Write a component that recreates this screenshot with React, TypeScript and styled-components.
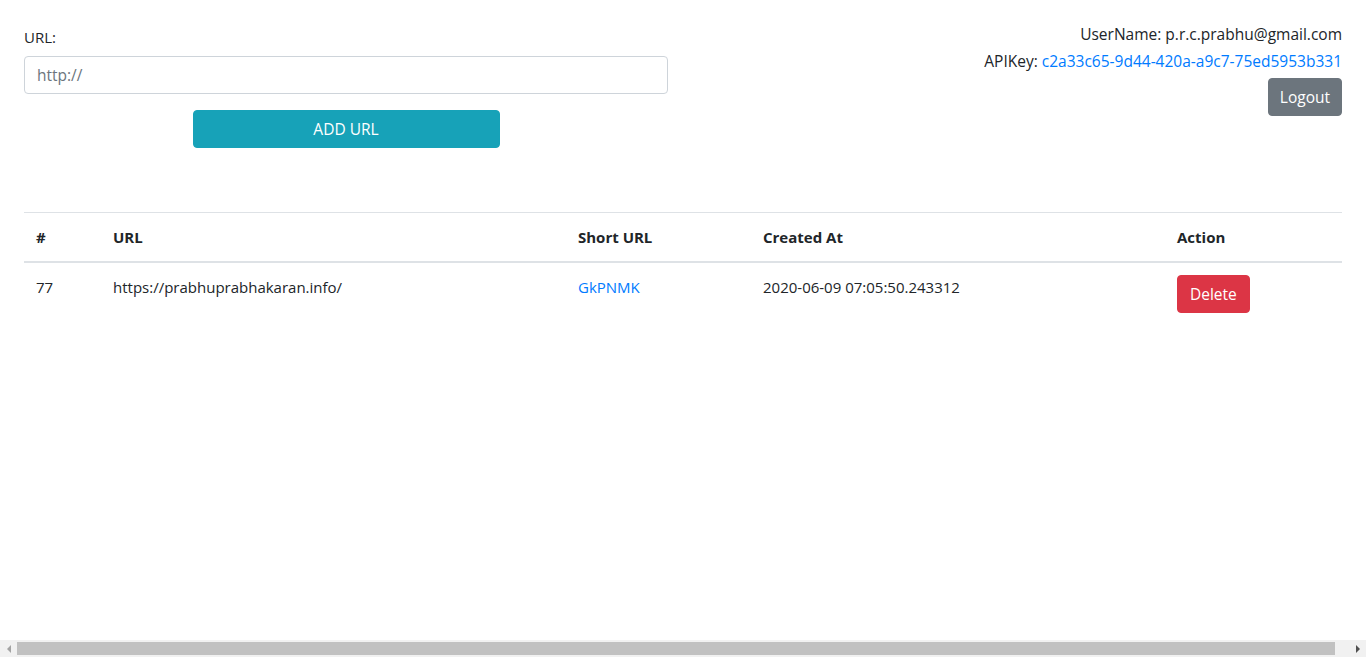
import React from "react";
import styled, { createGlobalStyle } from "styled-components";

const Global = createGlobalStyle`
  html, body { margin: 0; padding: 0; background: #fff; }
  body {
    font-family: "Open Sans", "Noto Sans", Arial, sans-serif;
    font-size: 15px;
    line-height: 24px;
    color: #212529;
    overflow: hidden;
  }
  * { box-sizing: border-box; }
`;

const Page = styled.div`
  width: 100%;
  padding: 22px 24px 0 24px;
`;

const Top = styled.div`
  display: grid;
  grid-template-columns: 644px 1fr;
  align-items: start;
`;

const FormCol = styled.form`
  display: flex;
  flex-direction: column;
  padding-top: 3px;
`;

const Label = styled.label`
  display: block;
  margin-bottom: 7px;
`;

const Input = styled.input`
  height: 38px;
  width: 100%;
  padding: 6px 12px;
  font: inherit;
  font-size: 15.5px;
  color: #495057;
  border: 1px solid #ced4da;
  border-radius: 4px;
  outline: none;
  &::placeholder { color: #6c757d; }
`;

const Button = styled.button<{ $bg: string }>`
  height: 38px;
  padding: 6px 12px;
  font: inherit;
  font-size: 15.5px;
  color: #fff;
  background: ${(p) => p.$bg};
  border: 1px solid ${(p) => p.$bg};
  border-radius: 4px;
  cursor: pointer;
`;

const AddButton = styled(Button)`
  width: 307px;
  align-self: center;
  margin-top: 16px;
`;

const UserCol = styled.div`
  display: flex;
  flex-direction: column;
  align-items: flex-end;
  text-align: right;
`;

const InfoLine = styled.div`
  font-size: 15.5px;
  line-height: 24px;
  margin-bottom: 3px;
  font-weight: 500;
`;

const Link = styled.a`
  color: #007bff;
  text-decoration: none;
`;

const LogoutButton = styled(Button)`
  margin-top: 2px;
  padding: 6px 11px;
`;

const Table = styled.table`
  width: 100%;
  margin-top: 64px;
  border-collapse: collapse;
  table-layout: fixed;
`;

const Th = styled.th<{ $w: number }>`
  width: ${(p) => p.$w}px;
  text-align: left;
  font-weight: 700;
  padding: 12px;
  vertical-align: bottom;
  border-top: 1px solid #dee2e6;
  border-bottom: 2px solid #dee2e6;
`;

const Td = styled.td`
  padding: 12px;
  vertical-align: top;
`;

const ScrollBar = styled.div`
  position: fixed;
  left: 0;
  right: 0;
  bottom: 0;
  height: 17px;
  background: #f1f1f1;
  display: flex;
  align-items: center;
`;

const Arrow = styled.div<{ $dir: "left" | "right"; $color: string }>`
  width: 17px;
  height: 17px;
  display: flex;
  align-items: center;
  justify-content: center;
  &::before {
    content: "";
    width: 0;
    height: 0;
    border-top: 4px solid transparent;
    border-bottom: 4px solid transparent;
    ${(p) =>
      p.$dir === "left"
        ? `border-right: 4px solid ${p.$color};`
        : `border-left: 4px solid ${p.$color};`}
  }
`;

const Track = styled.div`
  flex: 1;
  height: 17px;
  padding: 2px 14px 2px 0;
  display: flex;
`;

const Thumb = styled.div`
  flex: 1;
  background: #c1c1c1;
`;

export default function App() {
  return (
    <>
      <Global />
      <Page>
        <Top>
          <FormCol onSubmit={(e) => e.preventDefault()}>
            <Label htmlFor="url">URL:</Label>
            <Input id="url" placeholder="http://" />
            <AddButton $bg="#17a2b8" type="submit">ADD URL</AddButton>
          </FormCol>
          <UserCol>
            <InfoLine>UserName: p.r.c.prabhu@gmail.com</InfoLine>
            <InfoLine>
              APIKey: <Link href="#">c2a33c65-9d44-420a-a9c7-75ed5953b331</Link>
            </InfoLine>
            <LogoutButton $bg="#6c757d">Logout</LogoutButton>
          </UserCol>
        </Top>
        <Table>
          <thead>
            <tr>
              <Th $w={77}>#</Th>
              <Th $w={465}>URL</Th>
              <Th $w={185}>Short URL</Th>
              <Th $w={414}>Created At</Th>
              <Th $w={177}>Action</Th>
            </tr>
          </thead>
          <tbody>
            <tr>
              <Td>77</Td>
              <Td>https://prabhuprabhakaran.info/</Td>
              <Td><Link href="#">GkPNMK</Link></Td>
              <Td>2020-06-09 07:05:50.243312</Td>
              <Td><Button $bg="#dc3545">Delete</Button></Td>
            </tr>
          </tbody>
        </Table>
      </Page>
      <ScrollBar aria-hidden>
        <Arrow $dir="left" $color="#a3a3a3" />
        <Track>
          <Thumb />
        </Track>
        <Arrow $dir="right" $color="#505050" />
      </ScrollBar>
    </>
  );
}
